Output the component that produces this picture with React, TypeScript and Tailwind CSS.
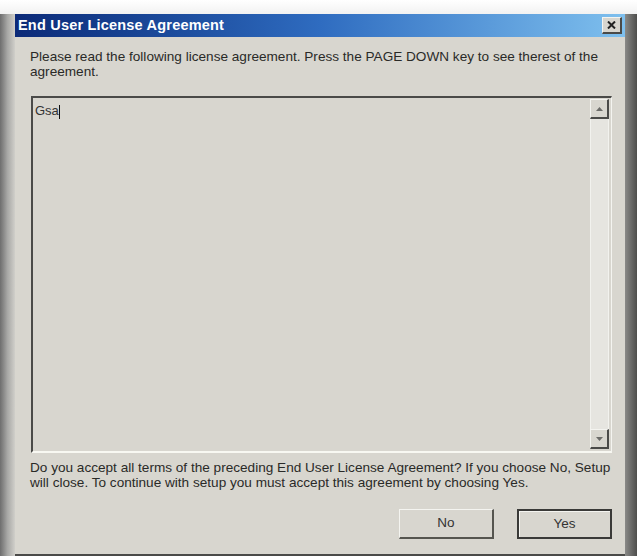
import React from 'react';

const font = { fontFamily: '"Liberation Sans", Arial, sans-serif' };

const ScrollArrow: React.FC<{ down?: boolean }> = ({ down }) => (
  <div className="w-[19px] h-[20px] bg-[#d8d6cf] border-t border-l border-t-[#f4f4f0] border-l-[#f4f4f0] border-r-2 border-b-2 border-r-[#4a4a48] border-b-[#4a4a48] flex items-center justify-center">
    <svg width="7" height="4" viewBox="0 0 7 4">
      {down ? <path d="M0 0 H7 L3.5 4 Z" fill="#6b6b68" /> : <path d="M0 4 H7 L3.5 0 Z" fill="#6b6b68" />}
    </svg>
  </div>
);

const Btn: React.FC<{ label: string; primary?: boolean }> = ({ label, primary }) => (
  <div
    className={
      'w-[95px] h-[30px] flex items-center justify-center text-[13.5px] text-[#333] bg-[#d8d6cf] ' +
      (primary
        ? 'border-2 border-[#3a3a38] shadow-[inset_1px_1px_0_#f4f4f0]'
        : 'border-t border-l border-t-[#f4f4f0] border-l-[#f4f4f0] border-r-2 border-b-2 border-r-[#55554f] border-b-[#55554f]')
    }
  >
    {label}
  </div>
);

export default function App() {
  return (
    <div className="w-[637px] h-[556px] bg-white flex flex-col overflow-hidden" style={font}>
      <div className="h-[14px] bg-gradient-to-b from-white to-[#f2f2f2]" />
      <div className="flex flex-1">
        <div className="w-[15px] bg-gradient-to-r from-[#6e6e6e] via-[#a8a8a6] to-[#d0cfca]" />
        <div className="w-[610px] flex flex-col bg-[#d8d6cf] border-b-2 border-b-[#4a4a48]">
          <div className="h-[23px] flex items-center justify-between pl-[3px] pr-[3px] bg-gradient-to-r from-[#0c2a78] via-[#2f6cc0] to-[#7fc0ee]">
            <span className="text-white font-bold text-[14.5px] tracking-[0.2px]">End User License Agreement</span>
            <div className="w-[20px] h-[17px] bg-[#d8d6cf] border-t border-l border-t-[#f4f4f0] border-l-[#f4f4f0] border-r-2 border-b-2 border-r-[#4a4a48] border-b-[#4a4a48] flex items-center justify-center">
              <svg width="9" height="8" viewBox="0 0 9 8">
                <path d="M1 0.5 L8 7.5 M8 0.5 L1 7.5" stroke="#222" strokeWidth="2" />
              </svg>
            </div>
          </div>
          <div className="flex flex-col pl-[15px] pr-[13px]">
            <p className="mt-[12px] text-[13.6px] leading-[15px] text-[#2a2a28] whitespace-nowrap">
              Please read the following license agreement. Press the PAGE DOWN key to see therest of the
              <br />
              agreement.
            </p>
            <div className="mt-[17px] ml-[1px] h-[357px] flex border-t-2 border-l-2 border-t-[#4a4a48] border-l-[#4a4a48] border-r border-b-2 border-r-[#f4f4f0] border-b-[#f8f8f2] bg-[#d8d6cf]">
              <div className="flex-1 pl-[2px] pt-[3px] text-[13px] text-[#333]">
                Gsa<span className="inline-block w-[1.5px] h-[14px] bg-[#111] align-middle" />
              </div>
              <div className="w-[22px] flex flex-col items-end pr-[2px] pt-[1px] pb-[2px]">
                <ScrollArrow />
                <div className="flex-1 w-[19px] bg-[#e6e5e0] border-x border-[#f2f2ee]" />
                <ScrollArrow down />
              </div>
            </div>
            <p className="mt-[7px] text-[13.6px] leading-[15px] text-[#2a2a28] whitespace-nowrap">
              Do you accept all terms of the preceding End User License Agreement? If you choose No, Setup
              <br />
              will close. To continue with setup you must accept this agreement by choosing Yes.
            </p>
            <div className="mt-[19px] flex justify-end gap-[23px]">
              <Btn label="No" />
              <Btn label="Yes" primary />
            </div>
          </div>
        </div>
        <div className="w-[12px] bg-gradient-to-r from-[#8a8a88] to-[#4e4e4c]" />
      </div>
    </div>
  );
}
